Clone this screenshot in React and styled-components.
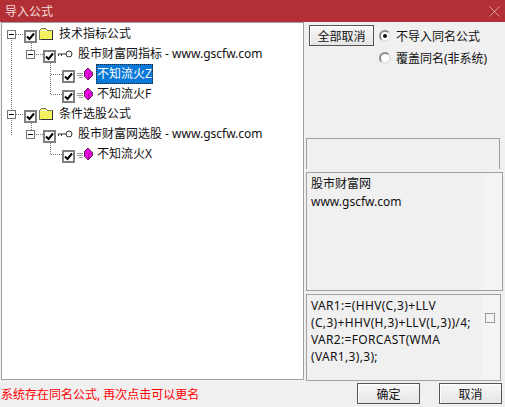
import React from "react"
import styled, { createGlobalStyle } from "styled-components"
import { X } from "lucide-react"

const GlobalStyle = createGlobalStyle`
  html, body { margin: 0; padding: 0; background: #f0f0f0; }
  body { font-family: "Noto Sans", "Noto Sans CJK SC", sans-serif; font-size: 12px; color: #111; }
`

const tree = [
  { level: 0, icon: "folder", label: "技术指标公式", expander: true },
  { level: 1, icon: "key", label: "股市财富网指标 - www.gscfw.com", expander: true },
  { level: 2, icon: "gem", label: "不知流火Z", selected: true },
  { level: 2, icon: "gem", label: "不知流火F" },
  { level: 0, icon: "folder", label: "条件选股公式", expander: true },
  { level: 1, icon: "key", label: "股市财富网选股 - www.gscfw.com", expander: true },
  { level: 2, icon: "gem", label: "不知流火X" },
]

function FolderIcon() {
  return (
    <svg width="16" height="14" viewBox="0 0 16 14" shapeRendering="crispEdges">
      <path d="M1.5 12.5V3.5L3.5 1.5H7.5L9 3H14.5V12.5Z" fill="#f4f060" stroke="#77775a" />
      <path d="M2.5 3.5H8.5" stroke="#fff" />
      <path d="M14.5 4V12.5H2.5" stroke="#333" fill="none" />
    </svg>
  )
}

function KeyIcon() {
  return (
    <svg width="16" height="10" viewBox="0 0 16 10">
      <circle cx="12" cy="5" r="3" fill="#fff" stroke="#333" />
      <path d="M9 5H1M1.5 5V7M4.5 5V7" stroke="#333" fill="none" />
    </svg>
  )
}

function GemIcon() {
  return (
    <svg width="17" height="14" viewBox="0 0 17 14" shapeRendering="crispEdges">
      <path d="M1 6.5H7M1 8.5H7M3 10.5H7" stroke="#999" />
      <path d="M11.5 1L16 5.5V9L12 13L8 9V4.5Z" fill="#f000e0" stroke="#3a103a" strokeWidth="0.8" />
      <path d="M12 12.5V7.5L15.5 6" stroke="#a000a0" fill="none" />
    </svg>
  )
}

const icons = { folder: FolderIcon, key: KeyIcon, gem: GemIcon }

function CheckMark() {
  return (
    <svg width="9" height="9" viewBox="0 0 9 9">
      <path d="M1 4.5L3.5 7L8 1.5" fill="none" stroke="#000" strokeWidth="2" />
    </svg>
  )
}

function TreeRow({ level, icon, label, expander, selected }) {
  const Icon = icons[icon]
  return (
    <Row $level={level}>
      <ExpanderSlot>{expander && <Expander />}</ExpanderSlot>
      <Check>
        <CheckMark />
      </Check>
      <IconSlot>
        <Icon />
      </IconSlot>
      <Label $selected={selected}>{label}</Label>
    </Row>
  )
}

function TreeLines() {
  return (
    <Lines width="120" height="160" viewBox="0 0 120 160">
      <g stroke="#777" strokeDasharray="1 1" fill="none" shapeRendering="crispEdges">
        <path d="M10.5 16V114M15 12H24" />
        <path d="M30.5 19V28M35 32H43" />
        <path d="M49.5 39V72M50 52H62M50 72H62" />
        <path d="M15 92H24" />
        <path d="M30.5 99V108M35 112H43" />
        <path d="M49.5 119V132M50 132H62" />
      </g>
    </Lines>
  )
}

export default function App() {
  return (
    <Window>
      <GlobalStyle />
      <TitleBar>
        <Title>导入公式</Title>
        <X size={19} strokeWidth={0.8} color="#f3dcdc" />
      </TitleBar>
      <Body>
        <TreePanel>
          <TreeLines />
          {tree.map((item) => (
            <TreeRow key={item.label} {...item} />
          ))}
        </TreePanel>
        <Side>
          <Controls>
            <ActionButton $width="65px">全部取消</ActionButton>
            <Radios>
              <RadioRow>
                <Radio $checked />
                不导入同名公式
              </RadioRow>
              <RadioRow>
                <Radio />
                覆盖同名(非系统)
              </RadioRow>
            </Radios>
          </Controls>
          <EmptyBox />
          <InfoBox>
            <InfoText>
              <div>股市财富网</div>
              <div>www.gscfw.com</div>
            </InfoText>
          </InfoBox>
          <FormulaBox>
            <FormulaText>
              VAR1:=(HHV(C,3)+LLV
              <br />
              (C,3)+HHV(H,3)+LLV(L,3))/4;
              <br />
              VAR2:=FORCAST(WMA
              <br />
              (VAR1,3),3);
            </FormulaText>
            <SmallBox />
          </FormulaBox>
        </Side>
      </Body>
      <Footer>
        <Warning>系统存在同名公式, 再次点击可以更名</Warning>
        <ActionButton $width="63px">确定</ActionButton>
        <ActionButton $width="63px">取消</ActionButton>
      </Footer>
    </Window>
  )
}

const Window = styled.div`
  width: 505px;
  height: 407px;
  display: flex;
  flex-direction: column;
  overflow: hidden;
  background: #f0f0f0;
`
const TitleBar = styled.div`
  height: 22px;
  flex: none;
  display: flex;
  align-items: center;
  justify-content: space-between;
  padding: 0 1px 0 5px;
  background: #b23035;
`
const Title = styled.div`
  color: #f3dcdc;
  font-size: 12px;
`
const Body = styled.div`
  height: 358px;
  flex: none;
  display: flex;
  gap: 2px;
  padding: 0 2px 0 1px;
`
const TreePanel = styled.div`
  position: relative;
  width: 303px;
  box-sizing: border-box;
  flex: none;
  padding: 1px 0 0 4px;
  background: #fff;
  border: 1px solid #a0a0a0;
`
const Lines = styled.svg`
  position: absolute;
  left: -1px;
  top: -1px;
  pointer-events: none;
`
const Row = styled.div`
  position: relative;
  height: 20px;
  display: flex;
  align-items: center;
  padding-left: ${(p) => p.$level * 19}px;
`
const ExpanderSlot = styled.div`
  width: 18px;
  flex: none;
  padding-left: 1px;
  box-sizing: border-box;
`
const Expander = styled.div`
  position: relative;
  width: 9px;
  height: 9px;
  box-sizing: border-box;
  border: 1px solid #777;
  background: #fff;

  &::after {
    content: "";
    position: absolute;
    left: 1px;
    right: 1px;
    top: 3px;
    height: 1px;
    background: #000;
  }
`
const Check = styled.div`
  width: 13px;
  height: 13px;
  flex: none;
  box-sizing: border-box;
  margin-top: 4px;
  border: 2px solid #808080;
  background: #fff;
  display: flex;
  align-items: center;
  justify-content: center;
`
const IconSlot = styled.div`
  width: 17px;
  flex: none;
  margin-left: 1px;
  display: flex;
  align-items: center;
`
const Label = styled.div`
  margin-left: 3px;
  padding: 0 1px;
  line-height: 20px;
  white-space: nowrap;
  font-size: 12px;
  color: ${(p) => (p.$selected ? "#fff" : "#111")};
  background: ${(p) => (p.$selected ? "#0a78d7" : "transparent")};
  outline: ${(p) => (p.$selected ? "1px dotted #222" : "none")};
  outline-offset: -1px;
`
const Side = styled.div`
  flex: 1;
  min-width: 0;
  display: flex;
  flex-direction: column;
`
const Controls = styled.div`
  height: 116px;
  flex: none;
  display: flex;
  align-items: flex-start;
  gap: 5px;
  padding: 3px 0 0 3px;
  box-sizing: border-box;
`
const ActionButton = styled.div`
  width: ${(p) => p.$width};
  height: 21px;
  flex: none;
  box-sizing: border-box;
  border: 1px solid #555;
  background: linear-gradient(#f7f7f7, #e6e6e6);
  box-shadow: inset 1px 1px 0 #fff;
  display: flex;
  align-items: center;
  justify-content: center;
  font-size: 12px;
  color: #111;
`
const Radios = styled.div`
  display: flex;
  flex-direction: column;
  gap: 2px;
  padding-top: 1px;
`
const RadioRow = styled.div`
  height: 20px;
  display: flex;
  align-items: center;
  gap: 5px;
  white-space: nowrap;
`
const Radio = styled.div`
  width: 12px;
  height: 12px;
  flex: none;
  box-sizing: border-box;
  border-radius: 50%;
  border: 2px solid;
  border-color: #8a8a8a #e4e4e4 #e4e4e4 #8a8a8a;
  background: #fff;
  display: flex;
  align-items: center;
  justify-content: center;

  &::after {
    content: "";
    width: 4px;
    height: 4px;
    border-radius: 50%;
    background: ${(p) => (p.$checked ? "#111" : "transparent")};
  }
`
const EmptyBox = styled.div`
  height: 31px;
  width: 194px;
  flex: none;
  box-sizing: border-box;
  border: 1px solid #a0a0a0;
  border-bottom: 0;
`
const InfoBox = styled.div`
  height: 119px;
  width: 197px;
  flex: none;
  margin-top: 3px;
  box-sizing: border-box;
  border: 1px solid #a0a0a0;
  background: #f4f4f2;
  line-height: 18px;
`
const InfoText = styled.div`
  width: 176px;
  height: 100%;
  box-sizing: border-box;
  padding: 2px 4px;
  background: #f0f0f0;
`
const FormulaBox = styled.div`
  height: 87px;
  width: 195px;
  flex: none;
  margin-top: 3px;
  box-sizing: border-box;
  border: 1px solid #a0a0a0;
  background: #f4f4f2;
  display: flex;
`
const FormulaText = styled.div`
  width: 175px;
  flex: none;
  box-sizing: border-box;
  padding: 2px 0 0 4px;
  line-height: 17px;
  white-space: nowrap;
  letter-spacing: 0.33px;
  background: #f0f0f0;
`
const SmallBox = styled.div`
  width: 10px;
  height: 10px;
  flex: none;
  box-sizing: border-box;
  margin: 18px 0 0 3px;
  border: 1px solid #999;
`
const Footer = styled.div`
  flex: 1;
  display: flex;
  align-items: center;
  padding: 0 3px 0 1px;
  gap: 19px;
`
const Warning = styled.div`
  flex: 1;
  color: #f00;
  font-size: 12px;
  white-space: nowrap;
`
